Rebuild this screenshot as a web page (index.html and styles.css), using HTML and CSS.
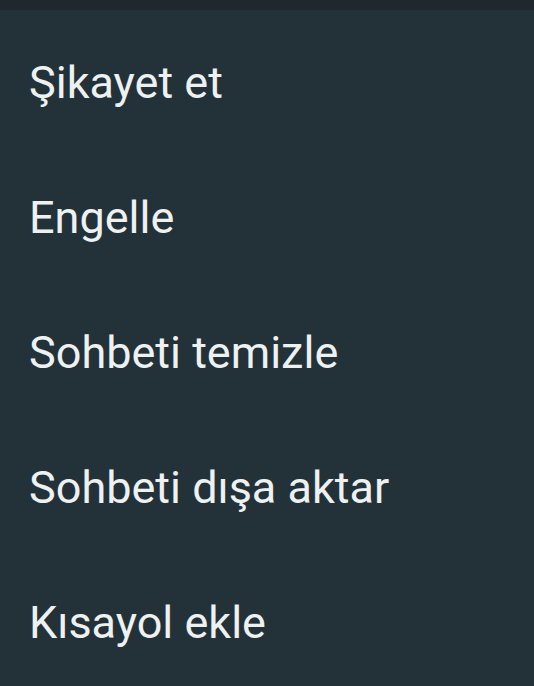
FILE: index.html
```html
<!DOCTYPE html>
<html lang="tr">
	<head>
		<meta charset="utf-8"/>
		<title>Sohbet menüsü</title>
		<link rel="stylesheet" href="styles.css">
	</head>
	<body>
		<div class="topbar"></div>
		<ul class="menu">
			<li class="menu-item">Şikayet et</li>
			<li class="menu-item">Engelle</li>
			<li class="menu-item">Sohbeti temizle</li>
			<li class="menu-item">Sohbeti dışa aktar</li>
			<li class="menu-item">Kısayol ekle</li>
		</ul>
	</body>
</html>
```

FILE: styles.css
```css
html, body {
	margin: 0;
	padding: 0;
}
body {
	width: 534px;
	height: 686px;
	overflow: hidden;
	background-color: #233138;
	font-family: Roboto, "Noto Sans", sans-serif;
}
.topbar {
	height: 10px;
	background-color: #1e282e;
}
.menu {
	list-style: none;
	margin: 0;
	padding: 5px 0 0 0;
}
.menu-item {
	height: 135px;
	display: flex;
	align-items: center;
	padding-left: 29px;
	color: #eef1f2;
	font-size: 45px;
}
```
